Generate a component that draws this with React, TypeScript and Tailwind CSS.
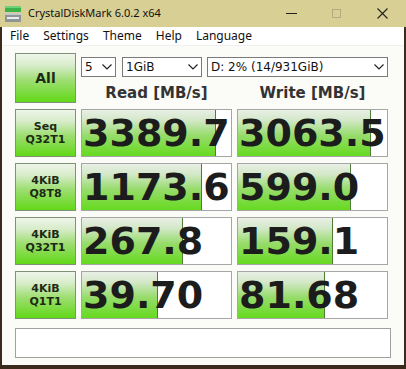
import { Fragment } from "react";

const ui = "font-['Noto_Sans',sans-serif]";
const tah = "font-['DejaVu_Sans',sans-serif]";

const buttonBg =
  "bg-[linear-gradient(to_bottom,#eef5ea_0%,#d6ecc8_25%,#9ede72_55%,#62d818_100%)]";
const barBg =
  "bg-[linear-gradient(to_bottom,#e9efe6_0%,#d3e8c8_22%,#97dc6c_55%,#66da1f_100%)]";

const rows = [
  { top: "Seq", bottom: "Q32T1", read: "3389.7", readBar: 134, write: "3063.5", writeBar: 133 },
  { top: "4KiB", bottom: "Q8T8", read: "1173.6", readBar: 120, write: "599.0", writeBar: 113 },
  { top: "4KiB", bottom: "Q32T1", read: "267.8", readBar: 101, write: "159.1", writeBar: 95 },
  { top: "4KiB", bottom: "Q1T1", read: "39.70", readBar: 76, write: "81.68", writeBar: 87 },
];

function Chevron() {
  return (
    <svg width="10" height="6" viewBox="0 0 10 6" className="shrink-0">
      <path d="M0.5 0.5 L5 5 L9.5 0.5" fill="none" stroke="#222" strokeWidth="1.2" />
    </svg>
  );
}

function Select({ value, width }: { value: string; width: string }) {
  return (
    <div
      className={`${width} flex h-[20px] items-center justify-between border border-[#7a7a7a] bg-white pl-[3px] pr-[3px] ${tah} text-[12px] text-[#111]`}
    >
      <span>{value}</span>
      <Chevron />
    </div>
  );
}

function Cell({ value, bar }: { value: string; bar: number }) {
  return (
    <div className="relative flex items-center overflow-hidden border border-[#a6a6a6] bg-white">
      <div className={`absolute top-0 bottom-0 left-0 ${barBg} border-r border-[#4f7d37]`} style={{ width: bar }} />
      <span className={`relative whitespace-nowrap pl-[1px] ${tah} text-[38px] font-bold leading-none text-[#1c1c1c]`}>
        {value}
      </span>
    </div>
  );
}

function TestButton({ top, bottom }: { top: string; bottom: string }) {
  return (
    <div
      className={`flex flex-col items-center justify-center border border-[#7f9176] ${buttonBg} ${tah} text-[11px] font-bold leading-[13px] text-[#1d2a14]`}
    >
      <span>{top}</span>
      <span>{bottom}</span>
    </div>
  );
}

export default function App() {
  return (
    <div className="flex h-[369px] w-[406px] flex-col overflow-hidden bg-[#3a2b1d]">
      <div className={`flex h-[27px] shrink-0 items-center bg-[#d7cf94] ${ui} text-[11px] text-[#111]`}>
        <svg width="16" height="16" viewBox="0 0 16 16" className="ml-[5px]">
          <rect x="0" y="0" width="16" height="6" fill="#3db24a" />
          <rect x="0" y="0" width="16" height="2" fill="#6fd27a" />
          <rect x="0" y="7" width="16" height="9" fill="#8e9595" />
          <rect x="0" y="7" width="16" height="2" fill="#c4c9c9" />
          <rect x="2" y="11" width="12" height="2" fill="#e8ecec" />
        </svg>
        <span className="ml-[7px]">CrystalDiskMark 6.0.2 x64</span>
        <svg width="11" height="2" viewBox="0 0 11 2" className="ml-[125px]">
          <rect x="0" y="0" width="11" height="1" fill="#222" />
        </svg>
        <svg width="9" height="9" viewBox="0 0 9 9" className="ml-[35px]">
          <rect x="0.5" y="0.5" width="8" height="8" fill="none" stroke="#b3ab80" />
        </svg>
        <svg width="11" height="11" viewBox="0 0 11 11" className="ml-[36px]">
          <path d="M0.5 0.5 L10.5 10.5 M10.5 0.5 L0.5 10.5" stroke="#222" strokeWidth="1.1" />
        </svg>
      </div>

      <div className="mx-[2px] flex h-[338px] flex-col bg-[#fbfbf8]">
        <div className={`flex h-[18px] items-center gap-[14px] bg-white pl-[8px] ${ui} text-[12px] text-[#111]`}>
          <span>File</span>
          <span>Settings</span>
          <span>Theme</span>
          <span>Help</span>
          <span>Language</span>
        </div>

        <div className="flex flex-col border-t border-[#f0f0f0] px-[13px] pt-[7px]">
          <div className="grid grid-cols-[61px_151px_151px] grid-rows-[50px_48px_48px_48px_48px] gap-x-[5px] gap-y-[6px]">
            <div
              className={`flex items-center justify-center border border-[#7f9176] ${buttonBg} ${tah} text-[14px] font-bold text-[#1d2a14]`}
            >
              All
            </div>
            <div className="col-span-2 flex flex-col">
              <div className="mt-[4px] flex gap-[5px]">
                <Select value="5" width="w-[35px] mr-[1px]" />
                <Select value="1GiB" width="w-[80px]" />
                <Select value="D: 2% (14/931GiB)" width="w-[181px]" />
              </div>
              <div className={`mt-[7px] grid grid-cols-2 gap-x-[5px] ${tah} text-[15px] font-bold leading-[18px] text-[#333]`}>
                <span className="text-center">Read [MB/s]</span>
                <span className="text-center">Write [MB/s]</span>
              </div>
            </div>

            {rows.map((r, i) => (
              <Fragment key={i}>
                <TestButton top={r.top} bottom={r.bottom} />
                <Cell value={r.read} bar={r.readBar} />
                <Cell value={r.write} bar={r.writeBar} />
              </Fragment>
            ))}
          </div>

          <div className="mt-[9px] h-[30px] border border-[#a0a0a0] bg-white" />
        </div>
      </div>
    </div>
  );
}
